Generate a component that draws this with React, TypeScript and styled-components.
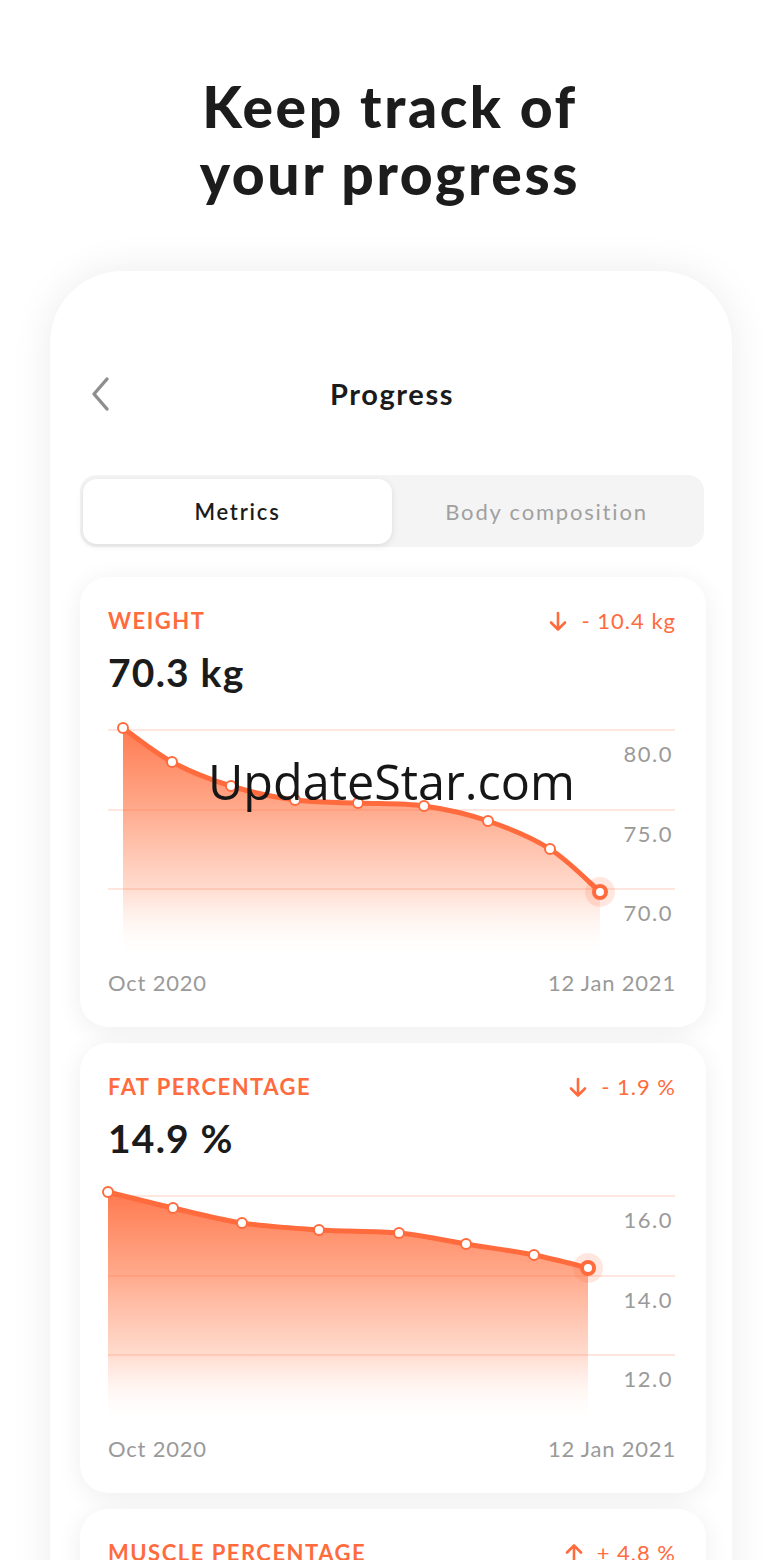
import React from 'react';
import styled, { createGlobalStyle } from 'styled-components';

const ORANGE = '#FF6B3D';
const FONT = `Lato, "Noto Sans", sans-serif`;

const GlobalStyle = createGlobalStyle`
  html, body {
    margin: 0;
    padding: 0;
    background: #ffffff;
    overflow: hidden;
  }
  body {
    font-family: ${FONT};
    color: #1b1b1b;
    -webkit-font-smoothing: antialiased;
  }
`;

const Page = styled.div`
  position: relative;
  width: 780px;
  height: 1560px;
  overflow: hidden;
  display: flex;
  flex-direction: column;
  align-items: flex-start;
`;

const Title = styled.h1`
  align-self: stretch;
  margin: 73px 0 0;
  font-family: ${FONT};
  font-weight: 900;
  font-size: 57px;
  line-height: 67px;
  text-align: center;
  color: #1c1c1c;
  letter-spacing: 2.6px;
`;

const Phone = styled.div`
  margin: 64px 0 0 50px;
  width: 682px;
  min-height: 1400px;
  box-sizing: border-box;
  padding: 95px 28px 0 30px;
  background: #ffffff;
  border-radius: 72px 72px 0 0;
  box-shadow: 0 0 42px rgba(0, 0, 0, 0.08);
  display: flex;
  flex-direction: column;
`;

const Header = styled.div`
  position: relative;
  height: 56px;
  display: flex;
  align-items: center;
  justify-content: center;
`;

const BackButton = styled.button`
  position: absolute;
  left: 8px;
  top: 10px;
  width: 24px;
  height: 36px;
  padding: 0;
  border: none;
  background: transparent;
  display: flex;
  align-items: center;
  justify-content: center;
`;

const HeaderTitle = styled.div`
  font-family: ${FONT};
  font-weight: 700;
  font-size: 29px;
  line-height: 56px;
  letter-spacing: 1.6px;
  color: #1b1b1b;
`;

const Segmented = styled.div`
  margin-top: 53px;
  height: 72px;
  box-sizing: border-box;
  padding: 4px 3px 3px 3px;
  border-radius: 16px;
  background: #f4f4f4;
  display: grid;
  grid-template-columns: 1fr 1fr;
`;

const Tab = styled.div<{ $active?: boolean }>`
  display: flex;
  align-items: center;
  justify-content: center;
  border-radius: 14px;
  font-family: ${FONT};
  font-size: 22px;
  letter-spacing: 1.8px;
  font-weight: ${(p) => (p.$active ? 600 : 400)};
  color: ${(p) => (p.$active ? '#1b1b1b' : '#a0a0a0')};
  background: ${(p) => (p.$active ? '#ffffff' : 'transparent')};
  box-shadow: ${(p) => (p.$active ? '0 2px 6px rgba(0,0,0,0.10)' : 'none')};
`;

const CardList = styled.div`
  margin-top: 30px;
  display: flex;
  flex-direction: column;
  gap: 16px;
  margin-right: -2px;
`;

const Card = styled.div`
  background: #ffffff;
  border-radius: 28px;
  box-shadow: 0 4px 26px rgba(0, 0, 0, 0.07);
  padding: 30px 30px 30px 28px;
  display: flex;
  flex-direction: column;
`;

const CardHeader = styled.div`
  height: 28px;
  display: flex;
  align-items: center;
  justify-content: space-between;
`;

const MetricLabel = styled.div`
  font-family: ${FONT};
  font-weight: 700;
  font-size: 22px;
  line-height: 28px;
  letter-spacing: 1.5px;
  color: ${ORANGE};
  white-space: nowrap;
`;

const Delta = styled.div`
  display: flex;
  align-items: center;
  gap: 14px;
  font-family: ${FONT};
  font-size: 22px;
  line-height: 28px;
  letter-spacing: 1px;
  color: ${ORANGE};
  white-space: nowrap;
`;

const Value = styled.div`
  margin-top: 12px;
  font-family: ${FONT};
  font-weight: 700;
  font-size: 39px;
  line-height: 50px;
  letter-spacing: 1.2px;
  color: #1b1b1b;
`;

const ChartSvg = styled.svg`
  display: block;
  margin-top: 18px;
  overflow: visible;
`;

const DateRow = styled.div`
  margin-top: 9px;
  display: flex;
  justify-content: space-between;
  font-family: ${FONT};
  font-size: 22px;
  line-height: 28px;
  letter-spacing: 0.8px;
  color: #9a9a9a;
`;

const Watermark = styled.div`
  position: absolute;
  left: 208px;
  top: 748px;
  font-family: "Open Sans", "Noto Sans", sans-serif;
  font-size: 48.5px;
  line-height: 66px;
  color: #161616;
  white-space: nowrap;
  pointer-events: none;
`;

type Pt = [number, number];

function smoothPath(pts: Pt[]): string {
  let d = `M${pts[0][0]},${pts[0][1]}`;
  for (let i = 0; i < pts.length - 1; i++) {
    const p0 = pts[i - 1] || pts[i];
    const p1 = pts[i];
    const p2 = pts[i + 1];
    const p3 = pts[i + 2] || p2;
    const c1x = p1[0] + (p2[0] - p0[0]) / 6;
    const c1y = p1[1] + (p2[1] - p0[1]) / 6;
    const c2x = p2[0] - (p3[0] - p1[0]) / 6;
    const c2y = p2[1] - (p3[1] - p1[1]) / 6;
    d += ` C${c1x.toFixed(1)},${c1y.toFixed(1)} ${c2x.toFixed(1)},${c2y.toFixed(1)} ${p2[0]},${p2[1]}`;
  }
  return d;
}

const W = 567;
const H = 245;
const GRID = [15, 95, 174];

function Chart({ id, points, labels }: { id: string; points: Pt[]; labels: string[] }) {
  const line = smoothPath(points);
  const first = points[0];
  const last = points[points.length - 1];
  const area = `${line} L${last[0]},${H - 4} L${first[0]},${H - 4} Z`;
  return (
    <ChartSvg width={W} height={H} viewBox={`0 0 ${W} ${H}`}>
      <defs>
        <linearGradient id={id} x1="0" y1="0" x2="0" y2={H} gradientUnits="userSpaceOnUse">
          <stop offset="0" stopColor={ORANGE} stopOpacity="0.95" />
          <stop offset="0.35" stopColor="#FF7A4C" stopOpacity="0.68" />
          <stop offset="0.7" stopColor="#FF8A60" stopOpacity="0.32" />
          <stop offset="1" stopColor="#FFFFFF" stopOpacity="0" />
        </linearGradient>
      </defs>
      <path d={area} fill={`url(#${id})`} />
      {GRID.map((y) => (
        <line key={y} x1={0} x2={W} y1={y} y2={y} stroke={ORANGE} strokeOpacity="0.22" strokeWidth="1.5" />
      ))}
      {labels.map((l, i) => (
        <text
          key={l}
          x={565}
          y={GRID[i] + 26}
          textAnchor="end"
          dominantBaseline="middle"
          fontFamily="Lato, sans-serif"
          fontSize="22"
          letterSpacing="1.5"
          fill="#9a9a9a"
        >
          {l}
        </text>
      ))}
      <path d={line} fill="none" stroke={ORANGE} strokeWidth="5" strokeLinecap="round" />
      {points.slice(0, -1).map(([x, y], i) => (
        <circle key={i} cx={x} cy={y} r="5" fill="#ffffff" stroke={ORANGE} strokeWidth="2" />
      ))}
      <circle cx={last[0]} cy={last[1]} r="15" fill={ORANGE} fillOpacity="0.16" />
      <circle cx={last[0]} cy={last[1]} r="8" fill={ORANGE} />
      <circle cx={last[0]} cy={last[1]} r="4" fill="#ffffff" />
    </ChartSvg>
  );
}

function Arrow({ up }: { up?: boolean }) {
  return (
    <svg width="18" height="21" viewBox="0 0 18 21" style={{ transform: up ? 'rotate(180deg)' : undefined }}>
      <path d="M9 2 V18.5 M2 11.5 L9 18.5 L16 11.5" fill="none" stroke={ORANGE} strokeWidth="2.6" strokeLinecap="round" strokeLinejoin="round" />
    </svg>
  );
}

const weightPts: Pt[] = [
  [15, 13], [64, 47], [123, 71], [187, 85], [250, 88], [316, 91], [380, 106], [442, 134], [492, 177],
];
const fatPts: Pt[] = [
  [0, 11], [65, 27], [134, 42], [211, 49], [291, 52], [358, 63], [426, 74], [480, 87],
];

export default function App() {
  return (
    <Page>
      <GlobalStyle />
      <Title>
        Keep track of
        <br />
        your progress
      </Title>
      <Phone>
        <Header>
          <BackButton aria-label="Back">
            <svg width="22" height="36" viewBox="0 0 22 36">
              <path d="M18 3 L5 18 L18 33" fill="none" stroke="#8e8e8e" strokeWidth="3.4" strokeLinecap="round" strokeLinejoin="round" />
            </svg>
          </BackButton>
          <HeaderTitle>Progress</HeaderTitle>
        </Header>
        <Segmented>
          <Tab $active>Metrics</Tab>
          <Tab>Body composition</Tab>
        </Segmented>
        <CardList>
          <Card>
            <CardHeader>
              <MetricLabel>WEIGHT</MetricLabel>
              <Delta>
                <Arrow />
                <span>- 10.4 kg</span>
              </Delta>
            </CardHeader>
            <Value>70.3 kg</Value>
            <Chart id="gw" points={weightPts} labels={['80.0', '75.0', '70.0']} />
            <DateRow>
              <span>Oct 2020</span>
              <span>12 Jan 2021</span>
            </DateRow>
          </Card>
          <Card>
            <CardHeader>
              <MetricLabel>FAT PERCENTAGE</MetricLabel>
              <Delta>
                <Arrow />
                <span>- 1.9 %</span>
              </Delta>
            </CardHeader>
            <Value>14.9 %</Value>
            <Chart id="gf" points={fatPts} labels={['16.0', '14.0', '12.0']} />
            <DateRow>
              <span>Oct 2020</span>
              <span>12 Jan 2021</span>
            </DateRow>
          </Card>
          <Card>
            <CardHeader>
              <MetricLabel>MUSCLE PERCENTAGE</MetricLabel>
              <Delta>
                <Arrow up />
                <span>+ 4.8 %</span>
              </Delta>
            </CardHeader>
          </Card>
        </CardList>
      </Phone>
      <Watermark>UpdateStar.com</Watermark>
    </Page>
  );
}
